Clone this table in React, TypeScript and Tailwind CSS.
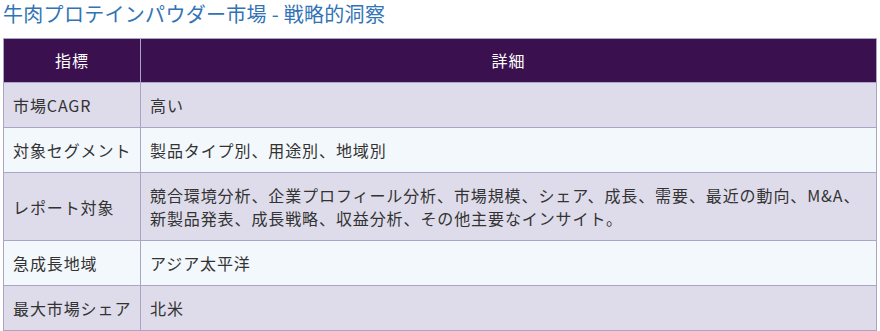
import React from "react";

const rows = [
  { label: "市場CAGR", detail: <>高い</> },
  { label: "対象セグメント", detail: <>製品タイプ別、用途別、地域別</> },
  {
    label: "レポート対象",
    detail: (
      <>
        競合環境分析、企業プロフィール分析、市場規模、シェア、成長、需要、最近の動向、M&amp;A、
        <br />
        新製品発表、成長戦略、収益分析、その他主要なインサイト。
      </>
    ),
  },
  { label: "急成長地域", detail: <>アジア太平洋</> },
  { label: "最大市場シェア", detail: <>北米</> },
];

const App = () => {
  return (
    <div className="w-[880px] h-[331px] bg-white pl-[3px] font-['Noto_Sans_CJK_JP',sans-serif] overflow-hidden">
      <h2 className="text-[20px] leading-[28px] text-[#3273b5] mb-[10px] tracking-[0.3px]">
        牛肉プロテインパウダー市場 - 戦略的洞察
      </h2>
      <table className="w-[874px] border-collapse table-fixed text-[16px] leading-[23px] text-[#333333] tracking-[0.9px]">
        <thead>
          <tr className="bg-[#3a114e] text-white">
            <th className="w-[137px] h-[44px] p-0 border border-[#aaa5c6] font-normal text-center">指標</th>
            <th className="h-[44px] p-0 border border-[#aaa5c6] font-normal text-center">詳細</th>
          </tr>
        </thead>
        <tbody>
          {rows.map((row, i) => (
            <tr key={row.label} className={i % 2 === 0 ? "bg-[#dedcea]" : "bg-[#f3f8fc]"}>
              <td className="border border-[#aaa5c6] px-[9px] pt-[11px] pb-[10px] align-middle whitespace-nowrap">{row.label}</td>
              <td className="border border-[#aaa5c6] px-[9px] pt-[11px] pb-[10px] align-middle">{row.detail}</td>
            </tr>
          ))}
        </tbody>
      </table>
    </div>
  );
};

export default App;
